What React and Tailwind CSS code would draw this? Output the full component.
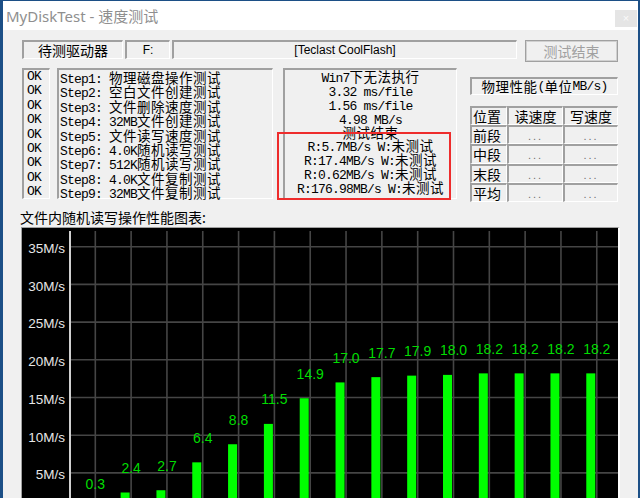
import React from "react";

const CJK_RE = /[\u2e80-\u9fff\uff00-\uffef]/;

function Mixed({ text }) {
  const runs = [];
  for (const ch of text) {
    const c = CJK_RE.test(ch);
    if (runs.length && runs[runs.length - 1].c === c) runs[runs.length - 1].t += ch;
    else runs.push({ c, t: ch });
  }
  return runs.map((r, i) =>
    r.c ? (
      <span key={i} className="text-[13.5px] tracking-[0.5px] font-['Noto_Sans_CJK_SC',sans-serif]">
        {r.t}
      </span>
    ) : (
      <span key={i} className="text-[13px] tracking-[-0.8px] font-['Liberation_Mono',monospace]">
        {r.t}
      </span>
    )
  );
}

const SUNKEN =
  "border-t-2 border-l-2 border-t-[#a0a0a0] border-l-[#a0a0a0] border-b border-r border-b-white border-r-white";

const steps = [
  "Step1: 物理磁盘操作测试",
  "Step2: 空白文件创建测试",
  "Step3: 文件删除速度测试",
  "Step4: 32MB文件创建测试",
  "Step5: 文件读写速度测试",
  "Step6: 4.0K随机读写测试",
  "Step7: 512K随机读写测试",
  "Step8: 4.0K文件复制测试",
  "Step9: 32MB文件复制测试",
];

const results = [
  "Win7下无法执行",
  "3.32 ms/file",
  "1.56 ms/file",
  "4.98 MB/s",
  "测试结束",
  "R:5.7MB/s W:未测试",
  "R:17.4MB/s W:未测试",
  "R:0.62MB/s W:未测试",
  "R:176.98MB/s W:未测试",
];

const data = [0.3, 2.4, 2.7, 6.4, 8.8, 11.5, 14.9, 17.0, 17.7, 17.9, 18.0, 18.2, 18.2, 18.2, 18.2];

function Chart() {
  const W = 596;
  const H = 279;
  const zero = 282.6;
  const k = 7.54;
  const hLines = [35, 30, 25, 20, 15, 10, 5];
  return (
    <svg width={W} height={H} className="block">
      {Array.from({ length: 15 }).map((_, i) => {
        const x = 73.3 + 35.82 * i;
        return <line key={"v" + i} x1={x} y1={3} x2={x} y2={H} stroke="#454545" strokeWidth="1.6" />;
      })}
      {hLines.map((v) => {
        const y = zero - v * k;
        return (
          <g key={"h" + v}>
            <line x1={48} y1={y} x2={W} y2={y} stroke="#454545" strokeWidth="1.6" />
            <text
              x={43}
              y={y + 6.3}
              textAnchor="end"
              fill="#e6e6e6"
              fontSize="13.5"
              fontFamily="Liberation Sans, Arial, sans-serif"
            >
              {v}M/s
            </text>
          </g>
        );
      })}
      <line x1={48} y1={3} x2={48} y2={H} stroke="#d0d0d0" strokeWidth="2" />
      {data.map((v, i) => {
        const top = zero - v * k;
        const x = 62.8 + 35.82 * i;
        return (
          <g key={"b" + i}>
            <rect x={x} y={top} width={9} height={H - top + 5} fill="#00ff00" />
            <text
              x={73.3 + 35.82 * i}
              y={top - 19.5}
              textAnchor="middle"
              fill="#00dc00"
              fontSize="14"
              fontFamily="Liberation Sans, Arial, sans-serif"
            >
              {v.toFixed(1)}
            </text>
          </g>
        );
      })}
    </svg>
  );
}

export default function App() {
  return (
    <div className="w-[640px] h-[498px] overflow-hidden flex flex-col bg-[#f0f0f0] border-l-[3px] border-r-2 border-t border-[#1c4f86] text-black">
      {/* Title bar */}
      <div className="h-[29px] shrink-0 bg-white flex items-start justify-between">
        <span className="pl-[3px] pt-[5px] text-[15px] leading-[20px] text-[#8f8f8f] font-['Noto_Sans','Noto_Sans_CJK_SC',sans-serif]">
          MyDiskTest - 速度测试
        </span>
        <div className="mt-[9px] mr-[1px] w-[22px] h-[17px] bg-[#e5e5e5] flex items-center justify-center text-[11px] leading-none text-[#fafafa] font-['Liberation_Sans',sans-serif]">
          ×
        </div>
      </div>

      {/* Body */}
      <div className="flex flex-col pl-[19px] pt-[10px]">
        {/* Row 1 */}
        <div className="flex items-start h-[22px]">
          <div className={`w-[101px] h-[19px] flex items-center justify-center text-[14px] leading-none font-['Noto_Sans_CJK_SC',sans-serif] ${SUNKEN}`}>
            待测驱动器
          </div>
          <div className={`ml-[2px] w-[45px] h-[19px] flex items-center justify-center text-[12px] leading-none font-['Liberation_Sans',sans-serif] ${SUNKEN}`}>
            F:
          </div>
          <div className={`ml-[2px] w-[345px] h-[19px] flex items-center justify-center text-[12px] leading-none font-['Liberation_Sans',sans-serif] ${SUNKEN}`}>
            [Teclast CoolFlash]
          </div>
          <div className="ml-[8px] w-[93px] h-[22px] border border-[#a0a0a0] shadow-[inset_0_0_0_1px_#d0d0d0] flex items-center justify-center text-[14px] leading-none text-[#a0a0a0] font-['Noto_Sans_CJK_SC',sans-serif]">
            测试结束
          </div>
        </div>

        {/* Row 2 */}
        <div className="mt-[6px] flex items-start">
          <div className={`w-[28px] h-[131px] pl-[3px] ${SUNKEN}`}>
            {steps.map((_, i) => (
              <div key={i} className="h-[14.4px] leading-[14.4px] text-[13px] tracking-[-0.8px] font-['Liberation_Mono',monospace]">
                OK
              </div>
            ))}
          </div>
          <div className={`ml-[7px] w-[216px] h-[131px] pl-[1px] ${SUNKEN}`}>
            {steps.map((s, i) => (
              <div key={i} className="h-[14.4px] leading-[14.4px] whitespace-pre">
                <Mixed text={s} />
              </div>
            ))}
          </div>
          <div className={`relative ml-[10px] w-[174px] h-[131px] ${SUNKEN}`}>
            {results.map((s, i) => (
              <div key={i} className="h-[13.9px] leading-[13.9px] whitespace-pre text-center">
                <Mixed text={s} />
              </div>
            ))}
            <div className="absolute left-[-8px] top-[62px] w-[174px] h-[68px] border-2 border-[#ee2c2c]" />
          </div>
          <div className="ml-[13px] w-[148px] pt-[9px] flex flex-col">
            <div className={`h-[18px] flex items-center justify-center leading-none whitespace-pre ${SUNKEN}`}>
              <Mixed text="物理性能(单位MB/s)" />
            </div>
            <div className="mt-[11px] grid grid-cols-[37px_56px_55px] auto-rows-[19.2px]">
              <div className={`flex items-center pl-[1px] text-[14px] leading-none font-['Noto_Sans_CJK_SC',sans-serif] ${SUNKEN}`}>位置</div>
              <div className={`flex items-center justify-center text-[14px] leading-none font-['Noto_Sans_CJK_SC',sans-serif] ${SUNKEN}`}>读速度</div>
              <div className={`flex items-center justify-center text-[14px] leading-none font-['Noto_Sans_CJK_SC',sans-serif] ${SUNKEN}`}>写速度</div>
              {["前段", "中段", "末段", "平均"].map((r) => (
                <React.Fragment key={r}>
                  <div className={`flex items-center pl-[1px] text-[14px] leading-none font-['Noto_Sans_CJK_SC',sans-serif] ${SUNKEN}`}>{r}</div>
                  <div className={`flex items-center justify-center pt-[3px] text-[11px] leading-none tracking-[2px] text-[#707070] font-['Liberation_Sans',sans-serif] ${SUNKEN}`}>...</div>
                  <div className={`flex items-center justify-center pt-[3px] text-[11px] leading-none tracking-[2px] text-[#707070] font-['Liberation_Sans',sans-serif] ${SUNKEN}`}>...</div>
                </React.Fragment>
              ))}
            </div>
          </div>
        </div>

        {/* Chart label */}
        <div className="mt-[7.5px] -ml-[2px] h-[16px] leading-[16px] text-[14px] font-['Noto_Sans_CJK_SC',sans-serif]">
          文件内随机读写操作性能图表:
        </div>

        {/* Chart */}
        <div className="mt-[1.5px] -ml-[1px] w-[599px] h-[280px] shrink-0 bg-black border-t border-l border-[#a0a0a0] border-r-2 border-r-white overflow-hidden">
          <Chart />
        </div>
      </div>
    </div>
  );
}
